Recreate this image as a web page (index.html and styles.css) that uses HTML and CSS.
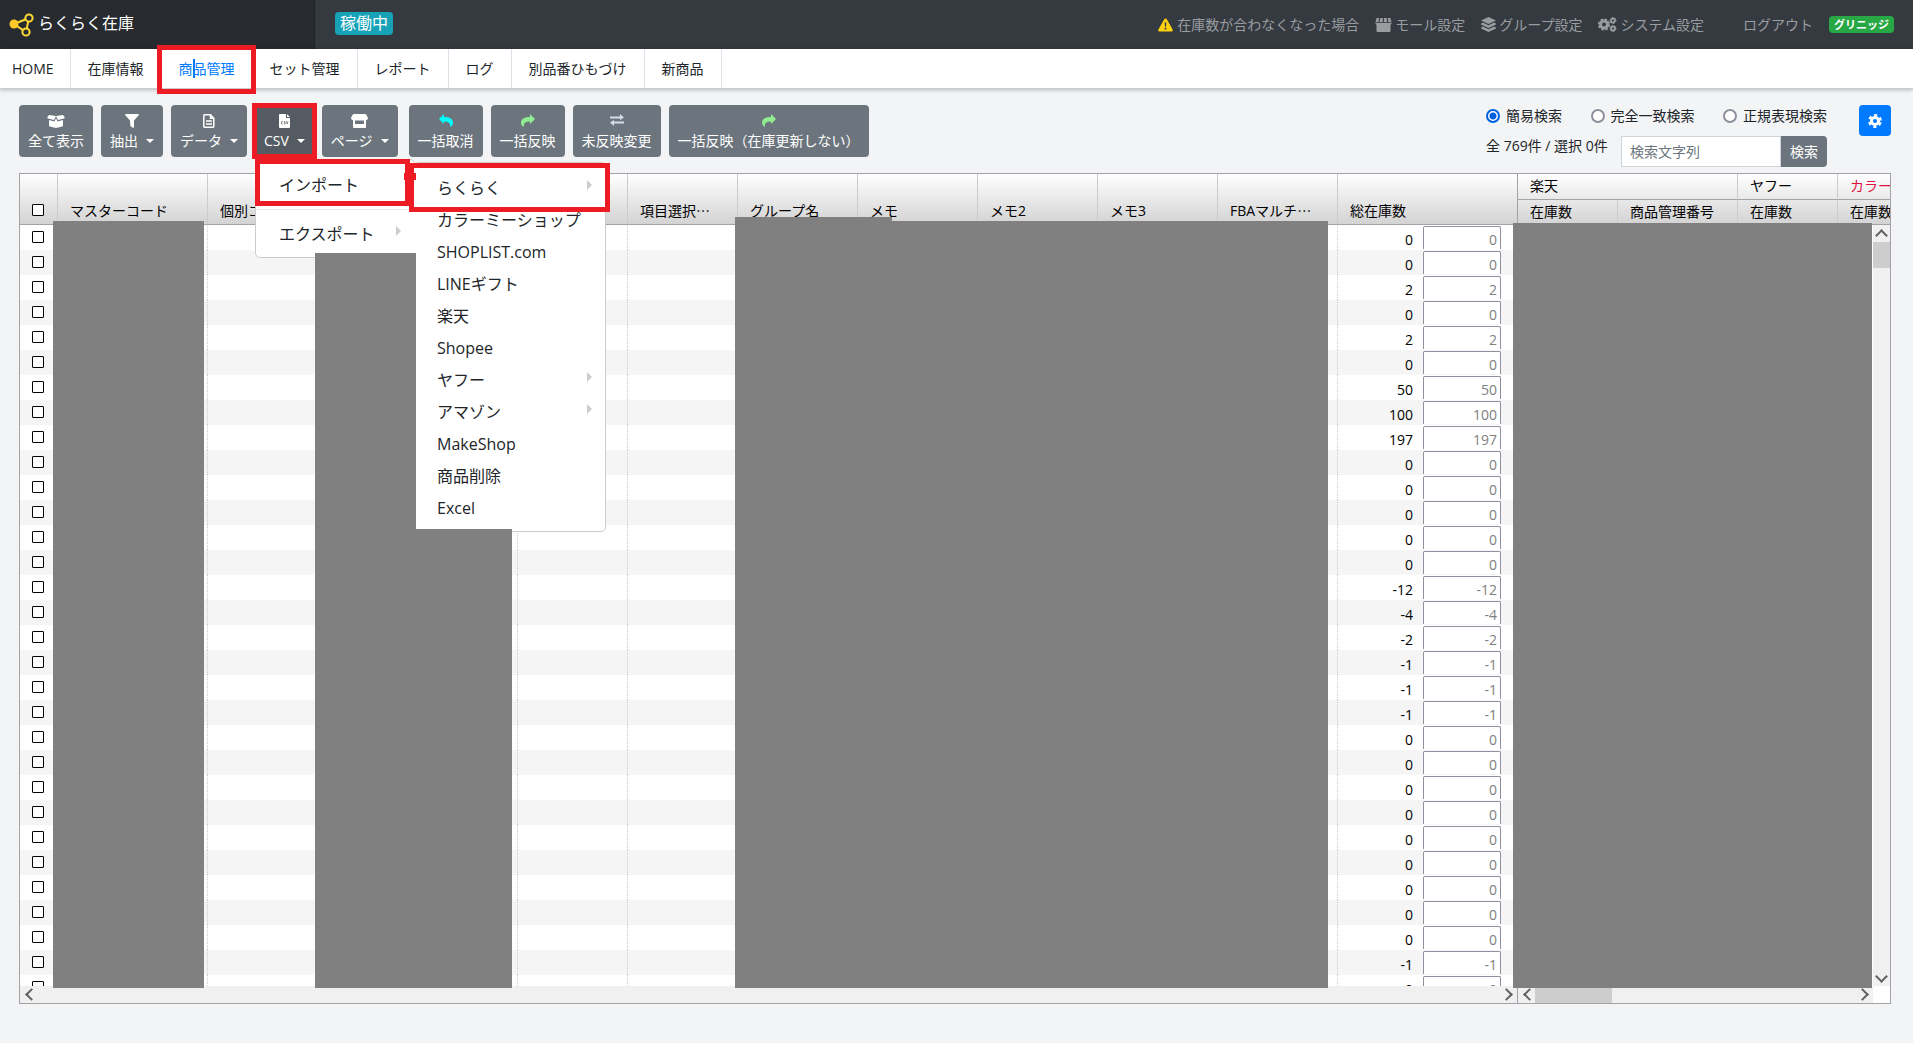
FILE: index.html
```html
<!DOCTYPE html>
<html lang="ja">
<head>
<meta charset="utf-8">
<title>らくらく在庫</title>
<link rel="stylesheet" href="styles.css">
</head>
<body>
<header class="topbar">
  <a class="brand" href="#">
    <svg width="25" height="24" viewBox="0 0 25 24" fill="none" stroke="#fdd835" stroke-width="2"><path d="M5 11 20 5 17 19Z"/><circle cx="5" cy="11" r="4.500" fill="#ffca28" stroke="none"/><circle cx="20" cy="5" r="3.600" fill="#272a2f"/><circle cx="17" cy="19" r="3.600" fill="#272a2f"/></svg>
    <span>らくらく在庫</span>
  </a>
  <span class="status">稼働中</span>
  <nav class="toplinks">
    <a href="#"><svg width="17" height="14" viewBox="0 0 18 16"><path d="M9 .5Q10 .5 10.500 1.500L17.300 13.500Q18 15.500 16 15.500H2Q0 15.500 .7 13.500L7.500 1.500Q8 .5 9 .5Z" fill="#fdd110"/><path d="M8 5h2l-.4 5H8.400zM8 11h2v2H8z" fill="#343a40"/></svg><span>在庫数が合わなくなった場合</span></a>
    <a href="#"><svg width="17" height="14" viewBox="0 0 17 14" fill="currentColor"><path d="M1.500 0H4L3.600 4H.5zM5 0h2.800v4H4.700zM8.900 0h2.800l.4 4H8.900zM12.800 0h2.500l1.200 4h-3.200zM0 4.700h17L15.500 7v6q0 1-1 1h-12q-1 0-1-1V7z"/></svg><span>モール設定</span></a>
    <a href="#"><svg width="15" height="15" viewBox="0 0 15 15" fill="currentColor"><path d="M7.500 0 15 3.500 7.500 7 0 3.500zM1.800 5.500 7.500 8.200l5.700-2.700L15 6.700v.8L7.500 11 0 7.500v-.8zM1.800 9.500l5.700 2.700 5.700-2.700 1.800 1.200v.8L7.500 15 0 11.500v-.8z"/></svg><span>グループ設定</span></a>
    <a href="#"><svg width="19" height="15" viewBox="0 0 19 15" fill="none" stroke="currentColor"><circle cx="6" cy="7.500" r="3.500" stroke-width="3"/><circle cx="6" cy="7.500" r="5.400" stroke-width="1.500" stroke-dasharray="2.600 1.640"/><circle cx="15" cy="3.500" r="2" stroke-width="1.800"/><circle cx="15" cy="3.500" r="3" stroke-dasharray="1.600 1.540"/><circle cx="15" cy="11.500" r="2" stroke-width="1.800"/><circle cx="15" cy="11.500" r="3" stroke-dasharray="1.600 1.540"/></svg><span>システム設定</span></a>
    <a class="logout" href="#">ログアウト</a>
    <span class="company">グリニッジ</span>
  </nav>
</header>

<nav class="tabs">
  <a href="#">HOME</a>
  <a href="#">在庫情報</a>
  <a class="current" href="#">商<i class="cursor"></i>品管理</a>
  <a href="#">セット管理</a>
  <a href="#">レポート</a>
  <a href="#">ログ</a>
  <a href="#">別品番ひもづけ</a>
  <a href="#">新商品</a>
</nav>

<main>
  <div class="tools">
    <div class="toolbar">
      <button class="tool" type="button"><svg width="18" height="14" viewBox="0 0 18 14" fill="currentColor"><path d="M2 1 9 2 7 6 1 4.500Q0 4 .5 3zM16 1 9 2l2 4 6-1.500q1-.5.500-1.500zM2 6l5.500 1.500L9 4l1.500 3.500L16 6v5.500q0 .8-1 1L9 14l-6-1.500q-1-.2-1-1z"/></svg><span>全て表示</span></button>
      <button class="tool" type="button"><svg width="14" height="14" viewBox="0 0 14 14" fill="currentColor"><path d="M.7 0h12.600q1.200.3.400 1.300L9 6.500V13q-.3 1.200-1.300.7L5.400 12 5 6.500.3 1.300Q-.3.300.7 0Z"/></svg><span class="has-caret">抽出</span></button>
      <button class="tool" type="button"><svg width="12" height="14" viewBox="0 0 12 14" fill="none" stroke="currentColor" stroke-width="1.500"><path d="M7.500.8H1.500Q.8.800.8 1.500v11q0 .7.700.7h8.500q.8 0 .8-.7V4.200zV4.200h3.300M3 7h6M3 10h6"/></svg><span class="has-caret">データ</span></button>
      <div class="dropdown">
        <button class="tool open" type="button" aria-expanded="true"><svg width="11" height="14" viewBox="0 0 11 14"><path d="M1 0h6v4h4v9q0 1-1 1H1q-1 0-1-1V1q0-1 1-1zM8 0l3 3H8z" fill="currentColor"/><path d="M3.800 7.500H2.500v2.500h1.300M6.300 7.500H5.200v1.200h1v1.300H5M7.500 7.300l.7 2.700.8-2.700" fill="none" stroke="#545b62" stroke-width=".7"/></svg><span class="has-caret">CSV</span></button>
        <div class="menu">
          <a class="entry framed" href="#">インポート</a>
          <hr>
          <a class="entry parent" href="#">エクスポート</a>
          <div class="submenu">
            <a class="entry parent framed" href="#">らくらく</a>
            <a class="entry" href="#">カラーミーショップ</a>
            <a class="entry" href="#">SHOPLIST.com</a>
            <a class="entry" href="#">LINEギフト</a>
            <a class="entry" href="#">楽天</a>
            <a class="entry" href="#">Shopee</a>
            <a class="entry parent" href="#">ヤフー</a>
            <a class="entry parent" href="#">アマゾン</a>
            <a class="entry" href="#">MakeShop</a>
            <a class="entry" href="#">商品削除</a>
            <a class="entry" href="#">Excel</a>
          </div>
        </div>
      </div>
      <button class="tool" type="button"><svg width="17" height="14" viewBox="0 0 17 14" fill="currentColor"><path d="M3 0h11q1 0 1.500 1L17 4q0 2-2 2.200V13q0 1-1 1H3q-1 0-1-1V6.200Q0 6 0 4l1.500-3Q2 0 3 0zM4 6.500V10h9V6.500z" fill-rule="evenodd"/></svg><span class="has-caret">ページ</span></button>
      <div class="batch">
        <button class="tool" type="button"><svg class="undo" width="14" height="13" viewBox="0 0 14 13" fill="currentColor"><path d="M0 5 5 0v3q9 0 9 5.500 0 3-3 4.500 1.500-5.500-6-5.500V10z"/></svg><span>一括取消</span></button>
        <button class="tool" type="button"><svg class="apply" width="14" height="13" viewBox="0 0 14 13" fill="currentColor"><path d="M14 5 9 0v3Q0 3 0 8.500q0 3 3 4.500-1.500-5.500 6-5.500V10z"/></svg><span>一括反映</span></button>
        <button class="tool" type="button"><svg class="swap" width="14" height="12" viewBox="0 0 14 12"><path d="M0 3.500h11M3 8.500h11" stroke="currentColor" stroke-width="1.800"/><path d="M10 0l4 3.500L10 6zM4 6 0 8.500 4 12z" fill="currentColor"/></svg><span>未反映変更</span></button>
        <button class="tool" type="button"><svg class="apply" width="14" height="13" viewBox="0 0 14 13" fill="currentColor"><path d="M14 5 9 0v3Q0 3 0 8.500q0 3 3 4.500-1.500-5.500 6-5.500V10z"/></svg><span>一括反映（在庫更新しない）</span></button>
      </div>
    </div>

    <form class="search">
      <div class="modes">
        <label><input type="radio" name="mode" checked>簡易検索</label>
        <label><input type="radio" name="mode">完全一致検索</label>
        <label><input type="radio" name="mode">正規表現検索</label>
      </div>
      <div class="query">
        <span class="count">全 769件 / 選択 0件</span>
        <input type="text" placeholder="検索文字列" aria-label="検索文字列">
        <button type="button">検索</button>
      </div>
    </form>
    <button class="gear" type="button" aria-label="設定"><svg width="14" height="14" viewBox="0 0 14 14" fill="none" stroke="#fff"><circle cx="7" cy="7" r="3.600" stroke-width="3"/><circle cx="7" cy="7" r="5.800" stroke-width="2.200" stroke-dasharray="3.200 2.874" stroke-dashoffset="-1.400"/></svg></button>
  </div>

  <section class="grid">
    <div class="pane fixed">
      <div class="view">
        <table>
          <colgroup><col class="w-check"><col class="w150"><col class="w160"><col class="w150"><col class="w110"><col class="w110"><col class="w120"><col class="w120"><col class="w120"><col class="w120"><col class="w120"><col class="w180"></colgroup>
          <thead><tr>
            <th class="pick"><input type="checkbox" aria-label="すべて選択"></th>
            <th>マスターコード</th><th>個別コード</th><th></th><th></th><th>項目選択<span class="more">…</span></th><th>グループ名</th><th>メモ</th><th>メモ2</th><th>メモ3</th><th>FBAマルチ<span class="more">…</span></th><th>総在庫数</th>
          </tr></thead>
          <tbody id="rows"></tbody>
        </table>
      </div>
      <div class="hbar"><i class="arrow left"></i><i class="arrow right"></i></div>
      <div class="mask mask-code"></div>
      <div class="mask mask-name"></div>
      <div class="mask mask-group"></div>
    </div>
    <div class="pane malls">
      <div class="view">
        <table>
          <colgroup><col class="w100"><col class="w120"><col class="w100"><col class="w100"></colgroup>
          <thead>
            <tr><th colspan="2">楽天</th><th>ヤフー</th><th class="alert">カラーミー</th></tr>
            <tr><th>在庫数</th><th>商品管理番号</th><th>在庫数</th><th>在庫数</th></tr>
          </thead>
        </table>
      </div>
      <div class="vbar"><i class="arrow up"></i><i class="thumb"></i><i class="arrow down"></i></div>
      <div class="hbar"><i class="arrow left"></i><i class="thumb"></i><i class="arrow right"></i></div>
      <div class="mask mask-malls"></div>
    </div>
  </section>
</main>
<script src="rows.js"></script>
</body>
</html>
```
FILE: styles.css
```css
* { box-sizing: border-box; }
body {
  margin: 0;
  height: 100vh;
  display: flex;
  flex-direction: column;
  background: #f3f4f6;
  color: #212529;
  font: 14px/20px "Open Sans", "Noto Sans CJK JP", sans-serif;
}
a { color: inherit; text-decoration: none; }
button, input { font: inherit; margin: 0; }
button { border: 0; cursor: pointer; }
svg { display: block; flex: none; }

/* top bar */
.topbar { display: flex; align-items: center; height: 49px; flex: none; background: #343a40; color: #9a9da0; }
.brand {
  display: flex; align-items: center; gap: 4px;
  width: 315px; height: 49px; padding-left: 9px;
  background: #272a2f; border-right: 1px solid #1f2226;
  color: #fff; font-size: 16px;
}
.brand span { padding-bottom: 3px; }
.status { margin: 0 auto 2px 20px; padding: 0 5px; border-radius: 4px; background: #17a2b8; color: #fff; font-size: 16px; line-height: 23px; }
.toplinks { display: flex; align-items: center; gap: 16px; padding-right: 19px; }
.toplinks a { display: flex; align-items: center; gap: 3px; }
.toplinks .logout { margin-left: 23px; }
.company { padding: 0 5px; border-radius: 4px; background: #28a745; color: #fff; font-size: 11px; font-weight: 700; line-height: 17px; }

/* tabs */
.tabs { display: flex; flex: none; height: 40px; background: #fff; border-bottom: 1px solid #ccc; box-shadow: 0 1px 4px rgba(0, 0, 0, .25); }
.tabs a { position: relative; padding: 0 17px; border-right: 1px solid #dee2e6; line-height: 39px; }
.tabs a:first-child { padding: 0 16px 0 12px; }
.tabs .current { color: #007bff; }
.tabs .current::after { content: ""; position: absolute; z-index: 3; inset: -4px -4px -6px -5px; border: 5px solid #ed1c24; }
.cursor { position: absolute; top: 10px; left: 31px; width: 2px; height: 19px; background: #007bff; }

/* toolbar */
main { flex: 1; min-height: 0; display: flex; flex-direction: column; gap: 6px; padding: 16px 22px 39px 19px; }
.tools { display: flex; align-items: flex-start; }
.toolbar, .batch { display: flex; gap: 8px; }
.batch { margin-left: 3px; }
.tool {
  display: flex; flex-direction: column; align-items: center; justify-content: space-between;
  height: 52px; padding: 9px 9px 6px; border-radius: 4px;
  background: #6c757d; color: #fff; line-height: 20px; white-space: nowrap;
}
.tool.open { background: #545b62; }
.has-caret::after { content: ""; display: inline-block; margin-left: 8px; vertical-align: 3px; border: 4px solid transparent; border-top-color: #fff; border-bottom: 0; }
.undo { color: #00ffff; }
.apply { color: #90ee90; }
.swap { color: #d8dce8; }

/* drop-down menu */
.dropdown { position: relative; }
.dropdown::before { content: ""; position: absolute; z-index: 5; inset: -2px -3px; border: 5px solid #ed1c24; pointer-events: none; }
.menu, .submenu { position: absolute; z-index: 4; background: #fff; border: 1px solid #ccc; border-radius: 5px; color: #212529; font-size: 16px; }
.menu { top: 54px; left: 0; width: 160px; padding: 9px 0 7px; }
.menu hr { margin: 8px 0; border: 0; border-top: 1px solid #e9ecef; }
.submenu { top: 2px; left: 158px; width: 192px; border-left: 0; padding: 9px 0 7px; }
.submenu::before { content: ""; position: absolute; z-index: 2; top: 10px; left: -10px; width: 12px; height: 7px; background: #ed1c24; }
.entry { position: relative; display: block; padding: 0 23px; line-height: 32px; white-space: nowrap; }
.parent::after { content: ""; position: absolute; top: 8px; right: 13px; border: 5px solid transparent; border-left-color: #ccc; border-right: 0; }
.framed::before { content: ""; position: absolute; z-index: 1; border: 5px solid #ed1c24; inset: -10px 4px -5px -1px; }
.submenu .framed::before { inset: -9px -5px -8px -5px; }

/* search */
.search { margin-left: auto; width: 341px; }
.modes { display: flex; justify-content: space-between; height: 22px; align-items: center; }
.modes label { display: flex; align-items: center; gap: 6px; }
.modes input { appearance: none; width: 14px; height: 14px; border: 2px solid #8f8f9d; border-radius: 50%; background: #fff; }
.modes input:checked { border-color: #0060df; background: radial-gradient(circle, #0060df 3px, #fff 4px); }
.query { display: flex; margin-top: 9px; height: 31px; }
.count { width: 135px; white-space: nowrap; }
.query input { flex: 1; min-width: 0; padding: 0 8px; border: 1px solid #ced4da; background: #fff; }
.query input::placeholder { color: #6c757d; opacity: 1; }
.query button { padding: 0 9px; border-radius: 0 4px 4px 0; background: #6c757d; color: #fff; }
.gear { display: flex; align-items: center; justify-content: center; width: 32px; height: 31px; margin-left: 32px; padding: 0; border-radius: 4px; background: #007bff; }

/* data grid */
.grid { flex: 1; min-height: 0; display: flex; border: 1px solid #a3a3a7; background: #fff; color: #000; }
.pane { position: relative; display: grid; grid-template: minmax(0, 1fr) 17px / minmax(0, 1fr); }
.fixed { flex: 0 0 1498px; border-right: 1px solid #a3a3a7; }
.malls { flex: 1; min-width: 0; grid-template-columns: minmax(0, 1fr) 17px; }
.malls .view { grid-column: 1 / 3; grid-row: 1; }
.view { overflow: hidden; }
table { table-layout: fixed; width: 0; border-collapse: separate; border-spacing: 0; }
.w-check { width: 38px; } .w100 { width: 100px; } .w110 { width: 110px; } .w120 { width: 120px; }
.w150 { width: 150px; } .w160 { width: 160px; } .w180 { width: 180px; }
th, td { padding: 0 12px; overflow: hidden; white-space: nowrap; }
thead { background: linear-gradient(#fff, #d2d2d2); }
th { height: 51px; padding-bottom: 3px; border-right: 1px solid #ccc; border-bottom: 1px solid #a3a3a7; text-align: left; vertical-align: bottom; font-weight: 400; line-height: 20px; }
.more { font-family: "Noto Sans CJK JP", sans-serif; line-height: 1; }
.malls th { height: 26px; padding-bottom: 3px; }
.malls tr + tr th { height: 25px; padding-bottom: 2px; }
th.alert { color: #dc143c; }
td { height: 25px; border-right: 1px dotted #ccc; }
th:last-child, td:last-child { border-right: 0; }
tbody tr:nth-child(even) { background: #f5f5f5; }
.pick { padding: 0 13px 8px 12px; }
td.pick { padding-bottom: 1px; border-right-color: transparent; }
.pick input { display: block; appearance: none; width: 12px; height: 12px; border: 1px solid #000; border-radius: 1px; background: #fff; }
.stock { display: flex; justify-content: flex-end; gap: 10px; height: 25px; padding: 1px 5px 1px 0; line-height: 27px; }
.stock input { width: 78px; height: 23px; padding: 3px 3px 0 0; border: 1px solid #8f8f9d; border-bottom: 0; border-radius: 2px 2px 0 0; background: #fff; color: #808080; text-align: right; }

/* scroll bars */
.hbar, .vbar { display: flex; background: #f0f0f0; }
.vbar { grid-column: 2; grid-row: 1; flex-direction: column; margin-top: 51px; z-index: 1; }
.malls .hbar { grid-column: 1; grid-row: 2; }
.thumb { background: #cdcdcd; }
.vbar .thumb { height: 26px; }
.hbar .thumb { width: 77px; }
.arrow { width: 17px; height: 17px; display: grid; place-items: center; flex: none; }
.arrow::before { content: ""; width: 7px; height: 7px; border: solid #606060; border-width: 2px 0 0 2px; transform: rotate(45deg); }
.left::before { margin-left: 5px; transform: rotate(-45deg); }
.right::before { margin-right: 5px; transform: rotate(135deg); }
.up::before { margin-top: 3px; }
.down::before { margin-bottom: 3px; transform: rotate(225deg); }
.right { margin-left: auto; }
.down { margin-top: auto; }

/* areas hidden from view */
.mask { position: absolute; top: 47px; bottom: 15px; background: #808080; }
.mask-code { left: 33px; width: 151px; }
.mask-name { z-index: 6; top: 79px; left: 295px; width: 197px; clip-path: polygon(0 0, 101px 0, 101px 276px, 100% 276px, 100% 100%, 0 100%); }
.mask-group { top: 43px; left: 715px; width: 593px; clip-path: polygon(0 0, 157px 0, 157px 4px, 100% 4px, 100% 100%, 0 100%); }
.mask-malls { z-index: 2; top: 49px; left: -5px; right: 18px; }
```
FILE: rows.js
```js
const stock = [0, 0, 2, 0, 2, 0, 50, 100, 197, 0, 0, 0, 0, 0, -12, -4, -2, -1, -1, -1,
  0, 0, 0, 0, 0, 0, 0, 0, 0, -1, 0];
document.getElementById('rows').innerHTML = stock.map((n, i) =>
  `<tr><td class="pick"><input type="checkbox" aria-label="${i + 1}行目を選択"></td>${'<td></td>'.repeat(10)}` +
  `<td><div class="stock"><span>${n}</span><input type="text" value="${n}" aria-label="総在庫数 ${i + 1}行目"></div></td></tr>`
).join('');
```
